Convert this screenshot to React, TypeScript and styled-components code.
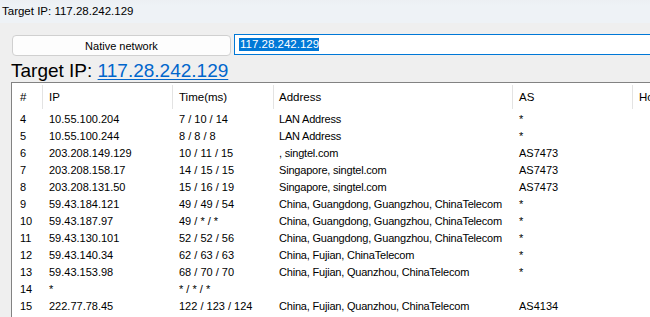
import React from "react";
import styled, { createGlobalStyle } from "styled-components";

const Global = createGlobalStyle`
  html, body { margin: 0; padding: 0; background: #efefef; }
  body { font-family: "Liberation Sans", Arial, sans-serif; color: #000; }
`;

const Window = styled.div`
  width: 650px;
  height: 317px;
  overflow: hidden;
  background: #efefef;
  display: flex;
  flex-direction: column;
`;

const TitleBar = styled.div`
  height: 23px;
  flex: none;
  background: linear-gradient(to bottom, #eceff3 0px, #eef2f6 6px);
  font-size: 11.5px;
  line-height: 23px;
  padding-left: 2px;
  white-space: nowrap;
`;

const Controls = styled.div`
  display: flex;
  align-items: flex-start;
  gap: 3px;
  height: 22px;
  margin: 11px 0 0 12px;
  width: 700px;
  flex: none;
`;

const ModeButton = styled.button`
  width: 219px;
  height: 21px;
  margin-top: 1px;
  box-sizing: border-box;
  background: #fdfdfd;
  border: 1px solid #d0d0d0;
  border-radius: 4px;
  font-family: "Liberation Sans", Arial, sans-serif;
  font-size: 11px;
  color: #000;
  padding: 0;
`;

const IpField = styled.div`
  flex: 1;
  height: 21px;
  box-sizing: border-box;
  background: #fff;
  border: 1px solid #0078d7;
  display: flex;
  align-items: center;
  padding-left: 4px;
`;

const Selected = styled.span`
  background: #0078d7;
  color: #fff;
  font-size: 11.5px;
  line-height: 13px;
  height: 13px;
  padding: 0 0 0 1px;
`;

const Heading = styled.div`
  margin: 4px 0 0 11px;
  font-size: 19px;
  line-height: 22px;
  height: 22px;
  white-space: nowrap;
  flex: none;
`;

const Link = styled.a`
  color: #0066cc;
  text-decoration: underline;
  text-underline-offset: 2px;
`;

const Table = styled.div`
  margin-left: 11px;
  flex: 1;
  width: 700px;
  background: #fff;
  border-left: 1px solid #828282;
  border-top: 1px solid #828282;
`;

const cols = "31px 130px 101px 239px 120px 1fr";

const HeaderRow = styled.div`
  display: grid;
  grid-template-columns: ${cols};
  height: 27px;
`;

const HeaderCell = styled.div<{ $pad: number }>`
  margin-top: 2px;
  height: 24px;
  border-right: 1px solid #e3e3e3;
  padding-left: ${(p) => p.$pad}px;
  font-size: 11.5px;
  line-height: 24px;
  white-space: nowrap;
`;

const Row = styled.div`
  display: grid;
  grid-template-columns: ${cols};
  height: 17px;
`;

const Cell = styled.div<{ $pad: number; $tight?: boolean }>`
  padding-left: ${(p) => p.$pad}px;
  font-size: 11px;
  line-height: 18px;
  letter-spacing: ${(p) => (p.$tight ? "-0.2px" : "0")};
  white-space: nowrap;
  overflow: hidden;
`;

const pads = [8, 6, 6, 5, 6, 6];
const headers = ["#", "IP", "Time(ms)", "Address", "AS", "Ho"];

const rows: string[][] = [
  ["4", "10.55.100.204", "7 / 10 / 14", "LAN Address", "*"],
  ["5", "10.55.100.244", "8 / 8 / 8", "LAN Address", "*"],
  ["6", "203.208.149.129", "10 / 11 / 15", ", singtel.com", "AS7473"],
  ["7", "203.208.158.17", "14 / 15 / 15", "Singapore, singtel.com", "AS7473"],
  ["8", "203.208.131.50", "15 / 16 / 19", "Singapore, singtel.com", "AS7473"],
  ["9", "59.43.184.121", "49 / 49 / 54", "China, Guangdong, Guangzhou, ChinaTelecom", "*"],
  ["10", "59.43.187.97", "49 / * / *", "China, Guangdong, Guangzhou, ChinaTelecom", "*"],
  ["11", "59.43.130.101", "52 / 52 / 56", "China, Guangdong, Guangzhou, ChinaTelecom", "*"],
  ["12", "59.43.140.34", "62 / 63 / 63", "China, Fujian, ChinaTelecom", "*"],
  ["13", "59.43.153.98", "68 / 70 / 70", "China, Fujian, Quanzhou, ChinaTelecom", "*"],
  ["14", "*", "* / * / *", "", ""],
  ["15", "222.77.78.45", "122 / 123 / 124", "China, Fujian, Quanzhou, ChinaTelecom", "AS4134"],
];

export default function App() {
  return (
    <>
      <Global />
      <Window>
        <TitleBar>Target IP: 117.28.242.129</TitleBar>
        <Controls>
          <ModeButton>Native network</ModeButton>
          <IpField>
            <Selected>117.28.242.129</Selected>
          </IpField>
        </Controls>
        <Heading>
          Target IP: <Link href="#">117.28.242.129</Link>
        </Heading>
        <Table>
          <HeaderRow>
            {headers.map((h, i) => (
              <HeaderCell key={h} $pad={pads[i]}>
                {h}
              </HeaderCell>
            ))}
          </HeaderRow>
          {rows.map((r) => (
            <Row key={r[0]}>
              {r.map((c, i) => (
                <Cell key={i} $pad={pads[i]} $tight={i === 3}>
                  {c}
                </Cell>
              ))}
              <Cell $pad={6} />
            </Row>
          ))}
        </Table>
      </Window>
    </>
  );
}
